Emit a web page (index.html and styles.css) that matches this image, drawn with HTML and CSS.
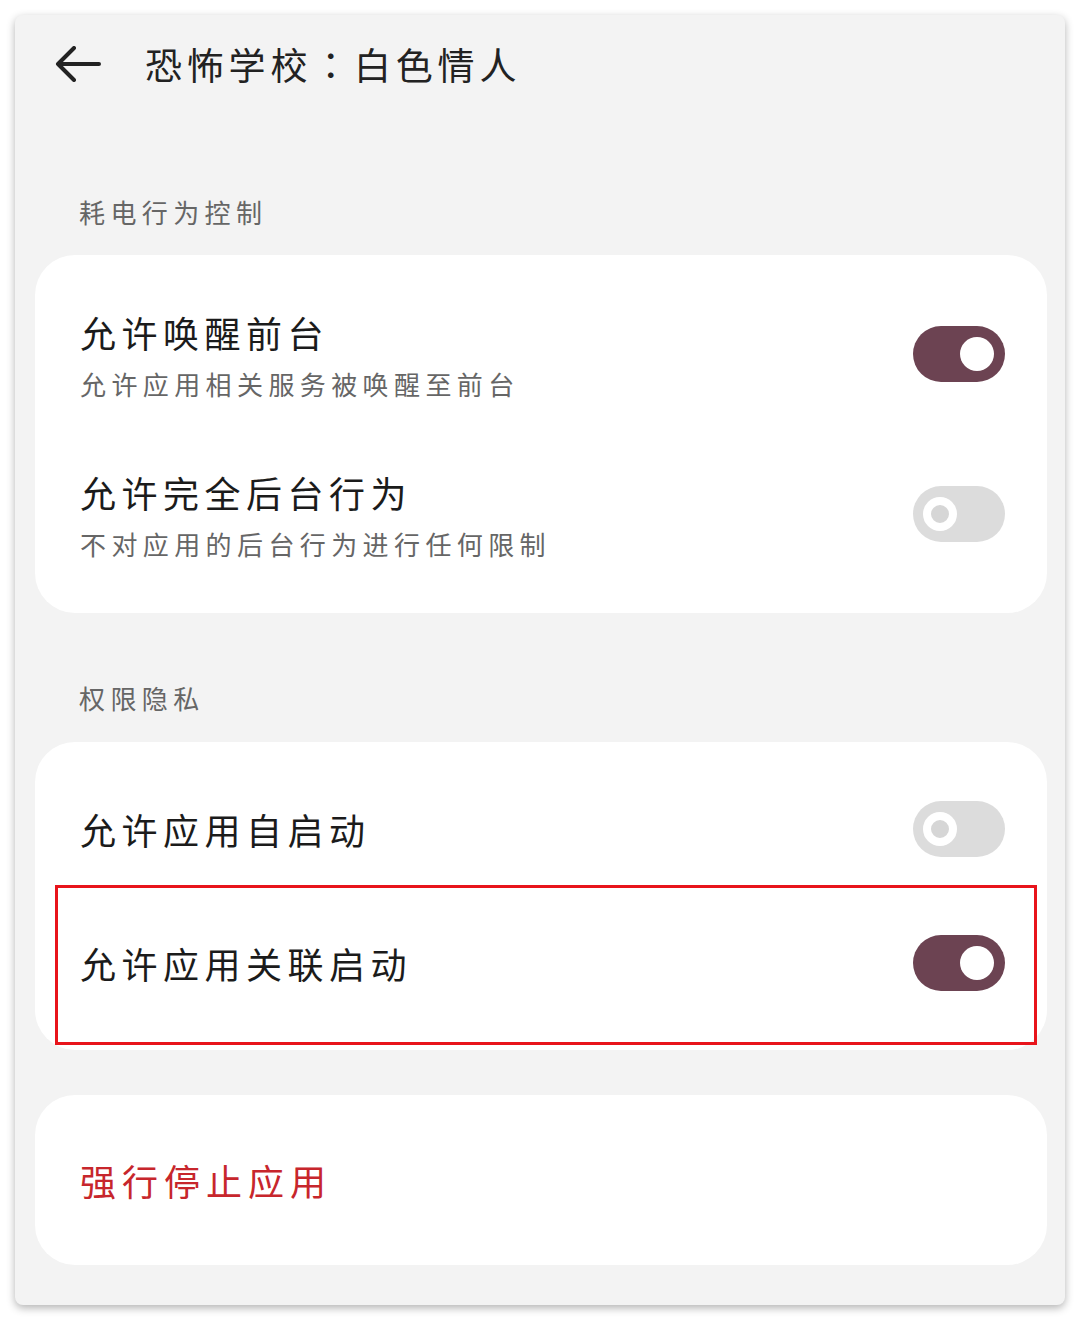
FILE: index.html
```html
<!DOCTYPE html>
<html lang="zh-CN">
<head>
<meta charset="utf-8">
<title>恐怖学校：白色情人</title>
<link rel="stylesheet" href="styles.css">
</head>
<body>
<div class="panel">
  <header class="header">
    <svg class="back" width="46" height="36" viewBox="0 0 46 36" aria-hidden="true">
      <path d="M3 18 H44 M19 2 L3 18 L19 34" fill="none" stroke="#222" stroke-width="4" stroke-linecap="round" stroke-linejoin="round"/>
    </svg>
    <h1 class="title">恐怖学校<span class="colon" lang="zh-TW">：</span>白色情人</h1>
  </header>

  <div class="section-label label-1">耗电行为控制</div>
  <div class="card card-tall">
    <div class="row row-tall">
      <div class="texts">
        <div class="row-title">允许唤醒前台</div>
        <div class="row-sub">允许应用相关服务被唤醒至前台</div>
      </div>
      <div class="toggle on"><span class="knob"></span></div>
    </div>
    <div class="row row-tall">
      <div class="texts">
        <div class="row-title">允许完全后台行为</div>
        <div class="row-sub">不对应用的后台行为进行任何限制</div>
      </div>
      <div class="toggle off"><span class="knob"></span></div>
    </div>
  </div>

  <div class="section-label label-2">权限隐私</div>
  <div class="card card-short">
    <div class="row row-short">
      <div class="row-title">允许应用自启动</div>
      <div class="toggle off"><span class="knob"></span></div>
    </div>
    <div class="row row-short">
      <div class="row-title">允许应用关联启动</div>
      <div class="toggle on"><span class="knob"></span></div>
      <div class="highlight"></div>
    </div>
  </div>

  <div class="card card-stop">
    <div class="stop">强行停止应用</div>
  </div>
</div>
</body>
</html>
```

FILE: styles.css
```css
html, body {
  margin: 0;
  padding: 0;
  background: #ffffff;
}

body {
  font-family: "Noto Sans CJK SC", "Noto Sans", sans-serif;
  padding: 15px 0 0 15px;
  width: 1080px;
  height: 1319px;
  box-sizing: border-box;
}

.panel {
  width: 1050px;
  height: 1290px;
  background: #f3f3f3;
  border-radius: 8px;
  box-shadow: 0 3px 9px rgba(0, 0, 0, 0.3);
  box-sizing: border-box;
  padding: 0 18px 0 20px;
  display: flex;
  flex-direction: column;
}

.header {
  height: 102px;
  display: flex;
  align-items: center;
  padding-left: 20px;
}

.back {
  display: block;
  margin-top: -4px;
}

.title {
  margin: -4px 0 0 44px;
  font-size: 37px;
  font-weight: 400;
  letter-spacing: 4.8px;
  color: #222;
  line-height: 1;
}

.colon {
  font-family: "Noto Sans CJK TC", "Noto Sans CJK JP", sans-serif;
}

.section-label {
  font-size: 26px;
  letter-spacing: 5.4px;
  color: #666;
  padding-left: 44px;
  line-height: 30px;
}

.label-1 {
  margin-top: 80px;
  margin-bottom: 28px;
}

.label-2 {
  margin-top: 70px;
  margin-bottom: 29px;
}

.card {
  background: #ffffff;
  border-radius: 40px;
  box-sizing: border-box;
}

.card-tall {
  padding: 19px 0;
  height: 358px;
}

.card-short {
  padding: 20px 0;
  height: 308px;
}

.card-stop {
  margin-top: 45px;
  height: 170px;
  display: flex;
  align-items: center;
  padding-left: 45px;
}

.row {
  position: relative;
  display: flex;
  align-items: center;
  justify-content: space-between;
  padding: 0 42px 0 45px;
}

.row-tall {
  height: 160px;
}

.row-short {
  height: 134px;
}

.texts {
  display: flex;
  flex-direction: column;
  gap: 13px;
  margin-top: 2px;
}

.row-title {
  font-size: 36px;
  letter-spacing: 5.5px;
  color: #1b1b1b;
  line-height: 44px;
}

.row-sub {
  font-size: 26px;
  letter-spacing: 5.4px;
  color: #666;
  line-height: 34px;
}

.toggle {
  position: relative;
  width: 92px;
  height: 56px;
  border-radius: 28px;
  flex: none;
}

.toggle.on {
  background: #6c4352;
}

.toggle.off {
  background: #dcdcdc;
}

.knob {
  position: absolute;
  top: 11px;
  width: 34px;
  height: 34px;
  border-radius: 50%;
  box-sizing: border-box;
}

.toggle.on .knob {
  right: 11px;
  background: #ffffff;
}

.toggle.off .knob {
  left: 10px;
  background: #d6d6d6;
  border: 8px solid #ffffff;
}

.highlight {
  position: absolute;
  top: -11px;
  bottom: -15px;
  left: 20px;
  right: 10px;
  border: 3px solid #e8141b;
  pointer-events: none;
}

.stop {
  font-size: 36px;
  letter-spacing: 6px;
  color: #c7262c;
  line-height: 44px;
}
```
